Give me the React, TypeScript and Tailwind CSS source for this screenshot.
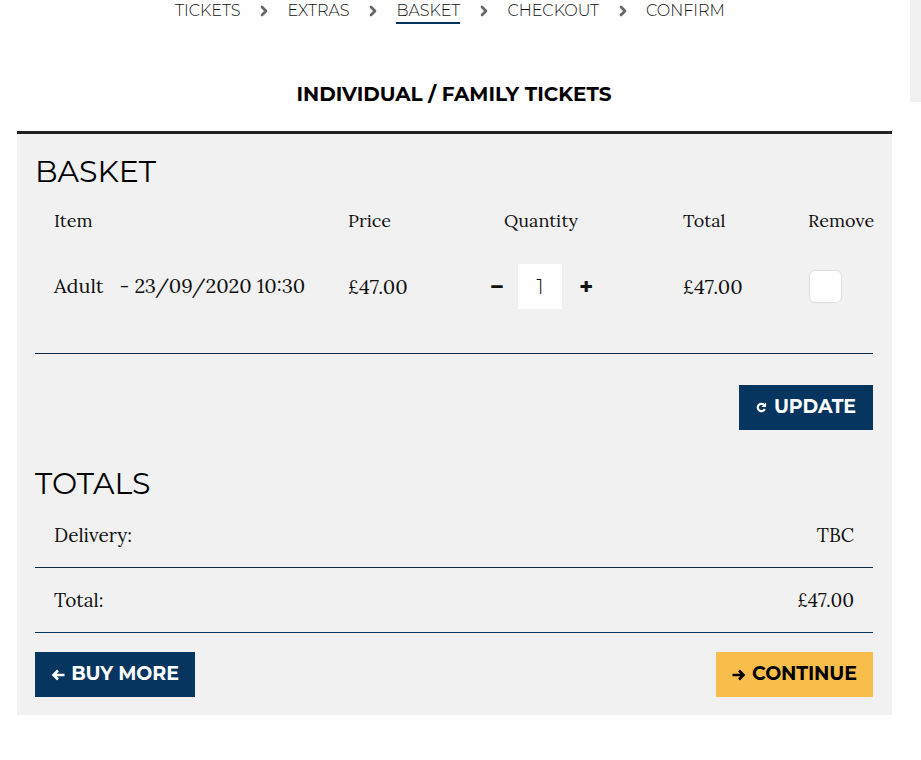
import { ChevronRight } from "lucide-react";

const sans = "font-['Montserrat','Inter',sans-serif]";
const serif = "font-['Lora','Liberation_Serif',serif]";

const steps = ["TICKETS", "EXTRAS", "BASKET", "CHECKOUT", "CONFIRM"];

function ArrowLeft({ className }: { className: string }) {
  return (
    <svg viewBox="0 0 14 12" className={className} fill="none" stroke="currentColor" strokeWidth="2.6">
      <path d="M13.5 6H3M7 1.5 2.5 6 7 10.5" />
    </svg>
  );
}

function ArrowRight({ className }: { className: string }) {
  return (
    <svg viewBox="0 0 14 12" className={className} fill="none" stroke="currentColor" strokeWidth="2.6">
      <path d="M.5 6H11M7 1.5 11.5 6 7 10.5" />
    </svg>
  );
}

function Refresh() {
  return (
    <svg viewBox="0 0 12 12" className="w-[11px] h-[11px]" fill="none" stroke="currentColor" strokeWidth="2.4">
      <path d="M9.6 7.6A4 4 0 1 1 8.6 3" />
      <path d="M11 .5v5H6z" fill="currentColor" stroke="none" />
    </svg>
  );
}

export default function App() {
  return (
    <div className={`relative w-[921px] h-[760px] bg-white text-[#111] overflow-hidden ${sans}`}>
      <div className="absolute top-0 right-0 w-[11px] h-[102px] bg-[#f1f1f1]" />

      <nav className="h-[23px] pl-[175px] flex items-start text-[16px] leading-[22px] font-light">
        {steps.map((step, idx) => (
          <div key={step} className="flex items-start">
            <span className={step === "BASKET" ? "h-[24px] border-b-2 border-[#06355f]" : "h-[24px]"}>{step}</span>
            {idx < steps.length - 1 && (
              <span className="w-[47px] h-[22px] flex items-center justify-center text-[#666]">
                <ChevronRight size={16} strokeWidth={4} />
              </span>
            )}
          </div>
        ))}
      </nav>

      <h1 className="mt-[59px] h-[24px] pr-[13px] text-center text-[20px] leading-[24px] font-bold text-black">
        INDIVIDUAL / FAMILY TICKETS
      </h1>

      <main className="mt-[25px] ml-[17px] w-[875px] h-[584px] border-t-[3px] border-[#222] bg-[#f1f1f1] pl-[18px] pr-[19px] pt-[20px]">
        <h2 className="text-[30px] leading-[36px] font-normal text-black">BASKET</h2>

        <div className={`mt-[19px] pl-[19px] grid grid-cols-[294px_125px_136px_199px_65px] items-center text-[18px] ${serif}`}>
          <span className="h-[24px] leading-[24px]">Item</span>
          <span className="h-[24px] leading-[24px]">Price</span>
          <span className="h-[24px] leading-[24px] text-center">Quantity</span>
          <span className="h-[24px] leading-[24px] pl-[74px]">Total</span>
          <span className="h-[24px] leading-[24px]">Remove</span>

          <span className="mt-[31px] h-[45px] leading-[44px] text-[20px] whitespace-nowrap">Adult&nbsp;&nbsp;&nbsp;- 23/09/2020 10:30</span>
          <span className="mt-[31px] h-[45px] leading-[46px] text-[20px]">£47.00</span>
          <div className="mt-[31px] h-[45px] mr-[2px] flex items-center justify-center">
            <span className={`w-[45px] pl-[3px] text-center text-[24px] font-bold ${sans}`}>−</span>
            <span className={`w-[45px] h-[45px] bg-white text-center leading-[46px] text-[20px] font-light ${sans}`}>1</span>
            <span className={`w-[45px] pl-[3px] text-center text-[24px] font-bold ${sans}`}>+</span>
          </div>
          <span className="mt-[31px] h-[45px] leading-[46px] text-[20px] pl-[74px]">£47.00</span>
          <div className="mt-[31px] h-[45px] flex items-center">
            <span className="ml-[1px] w-[33px] h-[33px] rounded-[6px] bg-white border border-[#dedede]" />
          </div>
        </div>

        <hr className="mt-[44px] border-[#0e2a45]" />

        <div className="mt-[31px] flex justify-end">
          <button className="h-[45px] w-[134px] bg-[#06355f] text-white flex items-center justify-center gap-[7px] text-[19px] font-bold tracking-[-0.1px]">
            <Refresh />
            UPDATE
          </button>
        </div>

        <h2 className="mt-[36px] text-[30px] leading-[36px] font-normal text-black">TOTALS</h2>

        <div className={`mt-[20px] flex justify-between px-[19px] h-[45px] text-[19px] leading-[26px] ${serif}`}>
          <span>Delivery:</span>
          <span>TBC</span>
        </div>
        <hr className="border-[#0e2a45]" />
        <div className={`mt-[19px] flex justify-between px-[19px] h-[45px] text-[19px] leading-[26px] ${serif}`}>
          <span>Total:</span>
          <span>£47.00</span>
        </div>
        <hr className="border-[#06355f]" />

        <div className="mt-[19px] flex justify-between text-[19px] font-bold tracking-[-0.1px]">
          <button className="h-[45px] w-[160px] bg-[#06355f] text-white flex items-center justify-center gap-[6px]">
            <ArrowLeft className="w-[14px] h-[12px]" />
            BUY MORE
          </button>
          <button className="h-[45px] w-[157px] bg-[#f9bd4b] text-black flex items-center justify-center gap-[6px]">
            <ArrowRight className="w-[14px] h-[12px]" />
            CONTINUE
          </button>
        </div>
      </main>
    </div>
  );
}
